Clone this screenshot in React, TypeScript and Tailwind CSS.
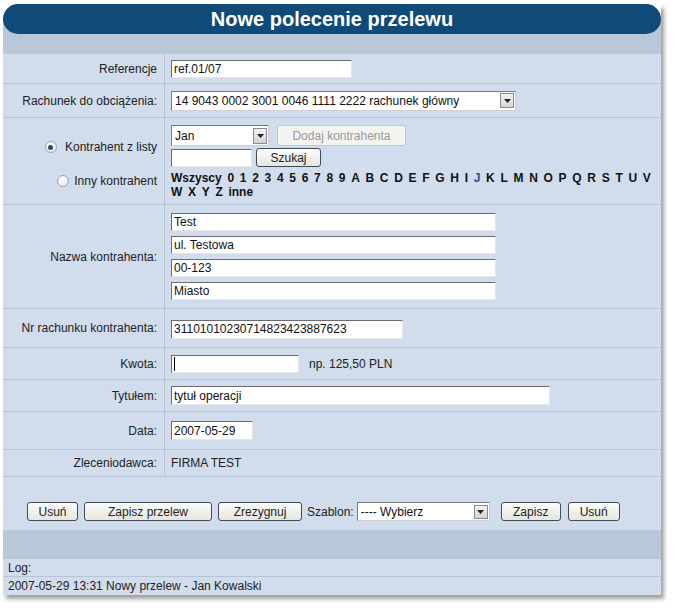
import React from 'react';

const font = { fontFamily: '"Liberation Sans", Arial, sans-serif' };

const letters = ['0','1','2','3','4','5','6','7','8','9','A','B','C','D','E','F','G','H','I','J','K','L','M','N','O','P','Q','R','S','T','U','V','W','X','Y','Z','inne'];

function TextBox({ value, className = '', caret = false }: { value?: string; className?: string; caret?: boolean }) {
  return (
    <div
      className={`flex items-center bg-white border border-t-[#6c6c6c] border-l-[#6c6c6c] border-r-[#e6e6e6] border-b-[#e6e6e6] pl-[2px] text-[12px] text-[#111] leading-none overflow-hidden whitespace-nowrap ${className}`}
    >
      {caret && <span className="block w-px h-[14px] bg-black" />}
      {value}
    </div>
  );
}

function Select({ value, className = '' }: { value: string; className?: string }) {
  return (
    <div className={`flex items-center bg-white border border-[#7b7b7b] border-r-[#d0d0d0] border-b-[#d0d0d0] text-[12px] text-[#111] ${className}`}>
      <span className="flex-1 pl-[3px] whitespace-nowrap overflow-hidden">{value}</span>
      <span className="mr-[1px] w-[14px] h-[calc(100%-3px)] flex items-center justify-center bg-[linear-gradient(#f2f2f2,#d4d4d4)] border border-[#8a8a8a]">
        <svg width="7" height="4" viewBox="0 0 7 4">
          <path d="M0 0h7L3.5 4z" fill="#222" />
        </svg>
      </span>
    </div>
  );
}

function Button({ children, className = '', disabled = false }: { children: React.ReactNode; className?: string; disabled?: boolean }) {
  return (
    <div
      className={`flex items-center justify-center rounded-[3px] border text-[12px] leading-none ${
        disabled
          ? 'border-[#c6c8c8] bg-[#f3f3ef] text-[#9a9a9a]'
          : 'border-[#3f4c5a] bg-[linear-gradient(#fcfcfa,#e6e6de)] text-[#222]'
      } ${className}`}
    >
      {children}
    </div>
  );
}

function Radio({ checked }: { checked?: boolean }) {
  return (
    <span className="w-[12px] h-[12px] rounded-full border border-[#98a4b0] bg-[radial-gradient(circle_at_40%_35%,#ffffff,#dfe3e8)] flex items-center justify-center">
      {checked && <span className="w-[5px] h-[5px] rounded-full bg-[#2a4a78]" />}
    </span>
  );
}

function Row({ label, h, children, labelClass = 'items-center justify-end' }: { label: React.ReactNode; h: string; children: React.ReactNode; labelClass?: string }) {
  return (
    <div className={`flex border-b border-[#b6c4d6] ${h}`}>
      <div className={`w-[162px] shrink-0 flex pr-[7px] border-r border-[#b6c4d6] text-[12px] text-[#222] ${labelClass}`}>{label}</div>
      <div className="flex-1 pl-[6px] flex items-center">{children}</div>
    </div>
  );
}

export default function App() {
  return (
    <div className="min-h-screen bg-white pt-[4px] pl-[3px]" style={font}>
      <div className="w-[658px] shadow-[3px_4px_4px_rgba(0,0,0,0.38)]">
        <div className="bg-[linear-gradient(#ffffff_50%,#b8c8d9_50%)]">
          <div className="h-[30px] rounded-[15px] bg-[#0f4a78] flex items-center justify-center">
            <span className="text-white font-bold text-[20px] leading-none">Nowe polecenie przelewu</span>
          </div>
        </div>
        <div className="h-[20px] bg-[#b8c8d9]" />

        <div className="bg-[#d1dcec]">
          <Row label="Referencje" h="h-[30px]">
            <TextBox value="ref.01/07" className="w-[181px] h-[18px]" />
          </Row>
          <Row label="Rachunek do obciążenia:" h="h-[34px]">
            <Select value="14 9043 0002 3001 0046 1111 2222 rachunek główny" className="w-[345px] h-[20px]" />
          </Row>
          <Row
            h="h-[87px]"
            labelClass="flex-col items-end pt-[22px] gap-[20px]"
            label={
              <>
                <span className="flex items-center gap-[8px] h-[14px]">
                  <Radio checked />
                  Kontrahent z listy
                </span>
                <span className="flex items-center gap-[5px] h-[14px]">
                  <Radio />
                  Inny kontrahent
                </span>
              </>
            }
          >
            <div className="self-start pt-[7px] flex flex-col">
              <div className="flex gap-[8px]">
                <Select value="Jan" className="w-[98px] h-[21px]" />
                <Button disabled className="w-[129px] h-[21px]">Dodaj kontrahenta</Button>
              </div>
              <div className="flex items-start gap-[4px] mt-[2px]">
                <TextBox className="w-[81px] h-[18px] mt-[1px]" />
                <Button className="w-[65px] h-[19px]">Szukaj</Button>
              </div>
              <div className="mt-[4px] w-[488px] flex flex-wrap gap-x-[5.7px] text-[12px] leading-[14px] font-bold text-[#111]">
                <span>Wszyscy</span>
                {letters.map((l) => (
                  <span key={l} className={l === 'J' ? 'text-[#2f4f8c]' : ''}>
                    {l}
                  </span>
                ))}
              </div>
            </div>
          </Row>
          <Row label="Nazwa kontrahenta:" h="h-[104px]">
            <div className="flex flex-col gap-[5px]">
              {['Test', 'ul. Testowa', '00-123', 'Miasto'].map((v) => (
                <TextBox key={v} value={v} className="w-[325px] h-[18px]" />
              ))}
            </div>
          </Row>
          <Row label="Nr rachunku kontrahenta:" h="h-[39px]">
            <TextBox value="31101010230714823423887623" className="w-[232px] h-[19px] mt-[2px]" />
          </Row>
          <Row label="Kwota:" h="h-[32px]">
            <TextBox caret className="w-[128px] h-[18px]" />
            <span className="ml-[10px] text-[12px] text-[#222]">np. 125,50 PLN</span>
          </Row>
          <Row label="Tytułem:" h="h-[32px]">
            <TextBox value="tytuł operacji" className="w-[379px] h-[19px]" />
          </Row>
          <Row label="Data:" h="h-[38px]">
            <TextBox value="2007-05-29" className="w-[82px] h-[19px]" />
          </Row>
          <Row label="Zleceniodawca:" h="h-[27px]">
            <span className="text-[12px] text-[#222]">FIRMA TEST</span>
          </Row>

          <div className="h-[53px] pt-[25px] pl-[24px] flex items-start text-[12px] text-[#222]">
            <Button className="w-[51px] h-[19px]">Usuń</Button>
            <Button className="w-[128px] h-[19px] ml-[6px]">Zapisz przelew</Button>
            <Button className="w-[84px] h-[19px] ml-[6px]">Zrezygnuj</Button>
            <span className="ml-[5px] h-[19px] flex items-center">Szablon:</span>
            <Select value="---- Wybierz" className="w-[133px] h-[19px] ml-[3px]" />
            <Button className="w-[60px] h-[19px] ml-[11px]">Zapisz</Button>
            <Button className="w-[52px] h-[19px] ml-[7px]">Usuń</Button>
          </div>

          <div className="h-[29px] bg-[#b8c8d9]" />
          <div className="h-[18px] flex items-center pl-[5px] border-b border-[#b6c4d6] text-[12px] text-[#222]">Log:</div>
          <div className="h-[18px] flex items-center pl-[5px] text-[12px] text-[#222]">2007-05-29 13:31 Nowy przelew - Jan Kowalski</div>
        </div>
      </div>
    </div>
  );
}
